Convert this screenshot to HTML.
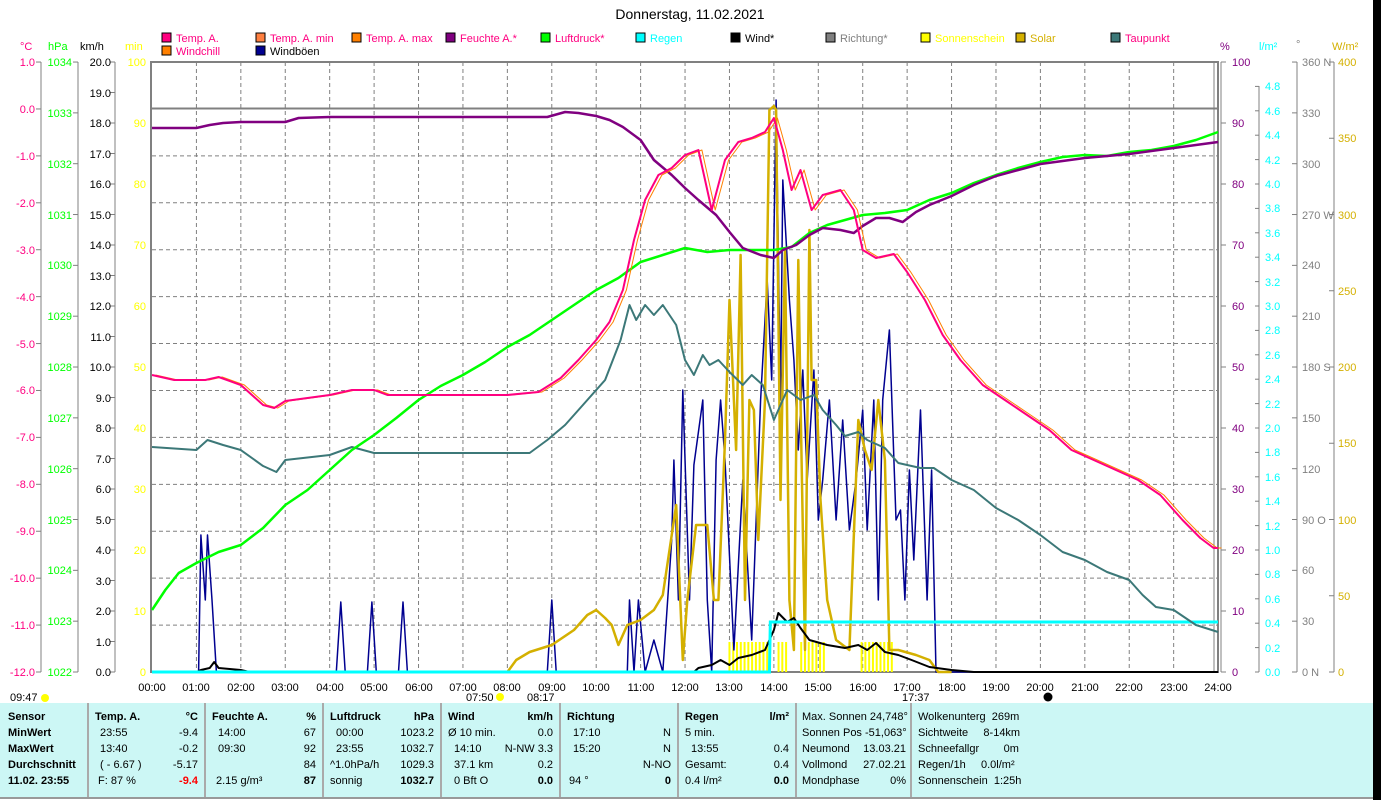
<!DOCTYPE html>
<html><head><meta charset="utf-8"><style>
body{margin:0;width:1381px;height:800px;background:#fff;overflow:hidden;font-family:"Liberation Sans",sans-serif;position:relative}
svg{position:absolute;left:0;top:0}
svg text{font-family:"Liberation Sans",sans-serif;font-size:11px}
.panel{position:absolute;left:0;top:703px;width:1373px;height:94px;background:#ccf7f5;border-bottom:2px solid #999}
.col{position:absolute;top:0;height:94px;border-right:2px solid #aaa;font-size:11px;color:#000}
.col div{position:absolute;white-space:nowrap;line-height:16px}
.b{font-weight:bold}
.blk{position:absolute;left:1373px;top:0;width:8px;height:800px;background:#000}
</style></head><body>
<svg width="1381" height="703" id="s">
<text x="690" y="19" text-anchor="middle" style="font-size:14px" fill="#000">Donnerstag, 11.02.2021</text>
<g id="grid"></g>
<g>
<rect x="162" y="33" width="9" height="9" fill="#ff0080" stroke="#000"/><text x="176" y="42" fill="#ff0080">Temp. A.</text>
<rect x="256" y="33" width="9" height="9" fill="#ff8040" stroke="#000"/><text x="270" y="42" fill="#ff0080">Temp. A. min</text>
<rect x="352" y="33" width="9" height="9" fill="#ff8000" stroke="#000"/><text x="366" y="42" fill="#ff0080">Temp. A. max</text>
<rect x="446" y="33" width="9" height="9" fill="#800080" stroke="#000"/><text x="460" y="42" fill="#ff0080">Feuchte A.*</text>
<rect x="541" y="33" width="9" height="9" fill="#00ff00" stroke="#000"/><text x="555" y="42" fill="#ff0080">Luftdruck*</text>
<rect x="636" y="33" width="9" height="9" fill="#00ffff" stroke="#000"/><text x="650" y="42" fill="#00ffff">Regen</text>
<rect x="731" y="33" width="9" height="9" fill="#000" stroke="#000"/><text x="745" y="42" fill="#000">Wind*</text>
<rect x="826" y="33" width="9" height="9" fill="#808080" stroke="#000"/><text x="840" y="42" fill="#808080">Richtung*</text>
<rect x="921" y="33" width="9" height="9" fill="#ffff00" stroke="#000"/><text x="935" y="42" fill="#ffff00">Sonnenschein</text>
<rect x="1016" y="33" width="9" height="9" fill="#d4b000" stroke="#000"/><text x="1030" y="42" fill="#d4b000">Solar</text>
<rect x="1111" y="33" width="9" height="9" fill="#3c7878" stroke="#000"/><text x="1125" y="42" fill="#ff0080">Taupunkt</text>
<rect x="162" y="46" width="9" height="9" fill="#ff8000" stroke="#000"/><text x="176" y="55" fill="#ff0080">Windchill</text>
<rect x="256" y="46" width="9" height="9" fill="#000090" stroke="#000"/><text x="270" y="55" fill="#000">Windböen</text>
</g>
<text x="20" y="50" fill="#ff0080">°C</text>
<text x="48" y="50" fill="#00ff00">hPa</text>
<text x="80" y="50" fill="#000">km/h</text>
<text x="125" y="50" fill="#ffff00">min</text>
<text x="1220" y="50" fill="#800080">%</text>
<text x="1259" y="50" fill="#00ffff">l/m²</text>
<text x="1296" y="48" fill="#808080">°</text>
<text x="1332" y="50" fill="#d4b000">W/m²</text>
<g text-anchor="end">
<text x="35" y="66" fill="#ff0080">1.0</text><text x="35" y="113" fill="#ff0080">0.0</text><text x="35" y="160" fill="#ff0080">-1.0</text><text x="35" y="207" fill="#ff0080">-2.0</text><text x="35" y="254" fill="#ff0080">-3.0</text><text x="35" y="301" fill="#ff0080">-4.0</text><text x="35" y="348" fill="#ff0080">-5.0</text><text x="35" y="394" fill="#ff0080">-6.0</text><text x="35" y="441" fill="#ff0080">-7.0</text><text x="35" y="488" fill="#ff0080">-8.0</text><text x="35" y="535" fill="#ff0080">-9.0</text><text x="35" y="582" fill="#ff0080">-10.0</text><text x="35" y="629" fill="#ff0080">-11.0</text><text x="35" y="676" fill="#ff0080">-12.0</text>
<text x="72" y="66" fill="#00ff00">1034</text><text x="72" y="117" fill="#00ff00">1033</text><text x="72" y="168" fill="#00ff00">1032</text><text x="72" y="219" fill="#00ff00">1031</text><text x="72" y="269" fill="#00ff00">1030</text><text x="72" y="320" fill="#00ff00">1029</text><text x="72" y="371" fill="#00ff00">1028</text><text x="72" y="422" fill="#00ff00">1027</text><text x="72" y="473" fill="#00ff00">1026</text><text x="72" y="524" fill="#00ff00">1025</text><text x="72" y="574" fill="#00ff00">1024</text><text x="72" y="625" fill="#00ff00">1023</text><text x="72" y="676" fill="#00ff00">1022</text>
<text x="111" y="66">20.0</text><text x="111" y="97">19.0</text><text x="111" y="127">18.0</text><text x="111" y="158">17.0</text><text x="111" y="188">16.0</text><text x="111" y="219">15.0</text><text x="111" y="249">14.0</text><text x="111" y="280">13.0</text><text x="111" y="310">12.0</text><text x="111" y="341">11.0</text><text x="111" y="371">10.0</text><text x="111" y="402">9.0</text><text x="111" y="432">8.0</text><text x="111" y="463">7.0</text><text x="111" y="493">6.0</text><text x="111" y="524">5.0</text><text x="111" y="554">4.0</text><text x="111" y="585">3.0</text><text x="111" y="615">2.0</text><text x="111" y="646">1.0</text><text x="111" y="676">0.0</text>
<g fill="#ffff00"><text x="146" y="66">100</text><text x="146" y="127">90</text><text x="146" y="188">80</text><text x="146" y="249">70</text><text x="146" y="310">60</text><text x="146" y="371">50</text><text x="146" y="432">40</text><text x="146" y="493">30</text><text x="146" y="554">20</text><text x="146" y="615">10</text><text x="146" y="676">0</text></g>
</g>
<g fill="#800080"><text x="1232" y="66">100</text><text x="1232" y="127">90</text><text x="1232" y="188">80</text><text x="1232" y="249">70</text><text x="1232" y="310">60</text><text x="1232" y="371">50</text><text x="1232" y="432">40</text><text x="1232" y="493">30</text><text x="1232" y="554">20</text><text x="1232" y="615">10</text><text x="1232" y="676">0</text></g>
<g fill="#00ffff"><text x="1265" y="90">4.8</text><text x="1265" y="115">4.6</text><text x="1265" y="139">4.4</text><text x="1265" y="164">4.2</text><text x="1265" y="188">4.0</text><text x="1265" y="212">3.8</text><text x="1265" y="237">3.6</text><text x="1265" y="261">3.4</text><text x="1265" y="286">3.2</text><text x="1265" y="310">3.0</text><text x="1265" y="334">2.8</text><text x="1265" y="359">2.6</text><text x="1265" y="383">2.4</text><text x="1265" y="408">2.2</text><text x="1265" y="432">2.0</text><text x="1265" y="456">1.8</text><text x="1265" y="481">1.6</text><text x="1265" y="505">1.4</text><text x="1265" y="530">1.2</text><text x="1265" y="554">1.0</text><text x="1265" y="578">0.8</text><text x="1265" y="603">0.6</text><text x="1265" y="627">0.4</text><text x="1265" y="652">0.2</text><text x="1265" y="676">0.0</text></g>
<g fill="#808080"><text x="1302" y="66">360 N</text><text x="1302" y="117">330</text><text x="1302" y="168">300</text><text x="1302" y="219">270 W</text><text x="1302" y="269">240</text><text x="1302" y="320">210</text><text x="1302" y="371">180 S</text><text x="1302" y="422">150</text><text x="1302" y="473">120</text><text x="1302" y="524">90 O</text><text x="1302" y="574">60</text><text x="1302" y="625">30</text><text x="1302" y="676">0 N</text></g>
<g fill="#d4b000"><text x="1338" y="66">400</text><text x="1338" y="142">350</text><text x="1338" y="219">300</text><text x="1338" y="295">250</text><text x="1338" y="371">200</text><text x="1338" y="447">150</text><text x="1338" y="524">100</text><text x="1338" y="600">50</text><text x="1338" y="676">0</text></g>
<g text-anchor="middle" fill="#000"><text x="152" y="691">00:00</text><text x="196" y="691">01:00</text><text x="241" y="691">02:00</text><text x="285" y="691">03:00</text><text x="330" y="691">04:00</text><text x="374" y="691">05:00</text><text x="419" y="691">06:00</text><text x="463" y="691">07:00</text><text x="507" y="691">08:00</text><text x="552" y="691">09:00</text><text x="596" y="691">10:00</text><text x="641" y="691">11:00</text><text x="685" y="691">12:00</text><text x="729" y="691">13:00</text><text x="774" y="691">14:00</text><text x="818" y="691">15:00</text><text x="863" y="691">16:00</text><text x="907" y="691">17:00</text><text x="952" y="691">18:00</text><text x="996" y="691">19:00</text><text x="1040" y="691">20:00</text><text x="1085" y="691">21:00</text><text x="1129" y="691">22:00</text><text x="1174" y="691">23:00</text><text x="1218" y="691">24:00</text></g>
<text x="10" y="701">09:47</text><circle cx="45" cy="698" r="4" fill="#ffff00"/>
<text x="466" y="701">07:50</text><circle cx="500" cy="697" r="4" fill="#ffff00"/>
<text x="527" y="701">08:17</text>
<text x="902" y="701">17:37</text>
<circle cx="1048" cy="697" r="4.5" fill="#000"/>
<g id="curves"></g>
</svg>
<div class="blk"></div>
<div class="panel">
 <div class="col" style="left:0;width:87px"><div class="b" style="left:8px;top:6px">Sensor</div><div class="b" style="left:8px;top:22px">MinWert</div><div class="b" style="left:8px;top:38px">MaxWert</div><div class="b" style="left:8px;top:54px">Durchschnitt</div><div class="b" style="left:8px;top:70px">11.02. 23:55</div></div>
 <div class="col" style="left:89px;width:115px"><div class="b" style="left:6px;top:6px">Temp. A.</div><div class="b" style="right:6px;top:6px">°C</div><div style="left:11px;top:22px">23:55</div><div style="right:6px;top:22px">-9.4</div><div style="left:11px;top:38px">13:40</div><div style="right:6px;top:38px">-0.2</div><div style="left:11px;top:54px">( - 6.67 )</div><div style="right:6px;top:54px">-5.17</div><div style="left:9px;top:70px">F: 87 %</div><div class="b" style="right:6px;top:70px;color:#f00">-9.4</div></div>
 <div class="col" style="left:206px;width:116px"><div class="b" style="left:6px;top:6px">Feuchte A.</div><div class="b" style="right:6px;top:6px">%</div><div style="left:12px;top:22px">14:00</div><div style="right:6px;top:22px">67</div><div style="left:12px;top:38px">09:30</div><div style="right:6px;top:38px">92</div><div style="right:6px;top:54px">84</div><div style="left:10px;top:70px">2.15 g/m³</div><div class="b" style="right:6px;top:70px">87</div></div>
 <div class="col" style="left:324px;width:116px"><div class="b" style="left:6px;top:6px">Luftdruck</div><div class="b" style="right:6px;top:6px">hPa</div><div style="left:12px;top:22px">00:00</div><div style="right:6px;top:22px">1023.2</div><div style="left:12px;top:38px">23:55</div><div style="right:6px;top:38px">1032.7</div><div style="left:6px;top:54px">^1.0hPa/h</div><div style="right:6px;top:54px">1029.3</div><div style="left:6px;top:70px">sonnig</div><div class="b" style="right:6px;top:70px">1032.7</div></div>
 <div class="col" style="left:442px;width:117px"><div class="b" style="left:6px;top:6px">Wind</div><div class="b" style="right:6px;top:6px">km/h</div><div style="left:6px;top:22px">Ø 10 min.</div><div style="right:6px;top:22px">0.0</div><div style="left:12px;top:38px">14:10</div><div style="right:6px;top:38px">N-NW 3.3</div><div style="left:12px;top:54px">37.1 km</div><div style="right:6px;top:54px">0.2</div><div style="left:12px;top:70px">0 Bft O</div><div class="b" style="right:6px;top:70px">0.0</div></div>
 <div class="col" style="left:561px;width:116px"><div class="b" style="left:6px;top:6px">Richtung</div><div style="left:12px;top:22px">17:10</div><div style="right:6px;top:22px">N</div><div style="left:12px;top:38px">15:20</div><div style="right:6px;top:38px">N</div><div style="right:6px;top:54px">N-NO</div><div style="left:8px;top:70px">94 °</div><div class="b" style="right:6px;top:70px">0</div></div>
 <div class="col" style="left:679px;width:116px"><div class="b" style="left:6px;top:6px">Regen</div><div class="b" style="right:6px;top:6px">l/m²</div><div style="left:6px;top:22px">5 min.</div><div style="left:12px;top:38px">13:55</div><div style="right:6px;top:38px">0.4</div><div style="left:6px;top:54px">Gesamt:</div><div style="right:6px;top:54px">0.4</div><div style="left:6px;top:70px">0.4 l/m²</div><div class="b" style="right:6px;top:70px">0.0</div></div>
 <div class="col" style="left:797px;width:113px"><div style="left:5px;top:6px">Max. Sonnen 24,748°</div><div style="left:5px;top:22px">Sonnen Pos -51,063°</div><div style="left:5px;top:38px">Neumond</div><div style="right:4px;top:38px">13.03.21</div><div style="left:5px;top:54px">Vollmond</div><div style="right:4px;top:54px">27.02.21</div><div style="left:5px;top:70px">Mondphase</div><div style="right:4px;top:70px">0%</div></div>
 <div class="col" style="left:912px;width:459px;border:none"><div style="left:6px;top:6px">Wolkenunterg&nbsp; 269m</div><div style="left:6px;top:22px">Sichtweite &nbsp;&nbsp;&nbsp; 8-14km</div><div style="left:6px;top:38px">Schneefallgr &nbsp;&nbsp;&nbsp;&nbsp;&nbsp;&nbsp; 0m</div><div style="left:6px;top:54px">Regen/1h &nbsp;&nbsp;&nbsp; 0.0l/m²</div><div style="left:6px;top:70px">Sonnenschein&nbsp; 1:25h</div></div>
</div>
<script>
var NS="http://www.w3.org/2000/svg";
function el(p,t,a){var e=document.createElementNS(NS,t);for(var k in a)e.setAttribute(k,a[k]);p.appendChild(e);return e;}
var g=document.getElementById('grid'),c=document.getElementById('curves');
function X(h){return 152+44.42*h;}
for(var i=1;i<24;i++)el(g,'line',{x1:X(i),y1:62,x2:X(i),y2:672,stroke:'#808080','stroke-dasharray':'4,3'});
for(var k=1;k<12;k++){var y=672-46.92*k;el(g,'line',{x1:152,y1:y,x2:1218,y2:y,stroke:'#808080','stroke-dasharray':'4,3'});}
el(g,'line',{x1:152,y1:108.5,x2:1218,y2:108.5,stroke:'#808080','stroke-width':2});
el(g,'rect',{x:151,y:62,width:1067,height:610,fill:'none',stroke:'#808080','stroke-width':2});
el(g,'line',{x1:1214,y1:62,x2:1214,y2:672,stroke:'#808080'});
[[41,62,672,46.92,-5],[78,62,672,50.83,-5],[115,62,672,30.5,-5],[1221,62,672,61,5],[1259,86,672,24.4,-4],[1297,62,672,50.83,-5],[1334,62,672,76.25,-5]].forEach(function(a){
 el(g,'line',{x1:a[0],y1:a[1],x2:a[0],y2:a[2],stroke:'#808080'});
 for(var y=a[2];y>=a[1]-1;y-=a[3])el(g,'line',{x1:a[0],y1:y,x2:a[0]+a[4],y2:y,stroke:'#808080'});
});
function poly(pts,col,w){var s=pts.map(function(p){return X(p[0]).toFixed(1)+','+p[1];}).join(' ');el(c,'polyline',{points:s,fill:'none',stroke:col,'stroke-width':w||2,'stroke-linejoin':'round'});}
for(var h=13.0;h<16.7;h+=0.085){if((h>13.9&&h<14.05)||(h>14.3&&h<14.55)||(h>15.2&&h<15.9))continue;el(c,'line',{x1:X(h),y1:642,x2:X(h),y2:672,stroke:'#ffff00','stroke-width':2});}
var gust=[[0,672],[1.05,672],[1.1,535],[1.2,600],[1.25,535],[1.35,600],[1.45,672],[4.15,672],[4.25,602],[4.35,672],[4.85,672],[4.95,602],[5.05,672],[5.55,672],[5.65,602],[5.75,672],[8.9,672],[9.0,600],[9.1,672],[10.7,672],[10.75,600],[10.85,672],[10.95,600],[11.1,672],[11.3,640],[11.5,672],[11.7,540],[11.75,460],[11.85,600],[11.95,390],[12.1,600],[12.2,465],[12.4,400],[12.5,600],[12.6,672],[12.7,460],[12.8,400],[12.9,460],[13.1,650],[13.3,480],[13.5,640],[13.7,400],[13.85,280],[13.95,380],[14.05,100],[14.15,400],[14.2,180],[14.35,300],[14.45,360],[14.55,450],[14.65,370],[14.75,480],[14.9,370],[15.0,520],[15.1,480],[15.25,400],[15.4,520],[15.55,420],[15.7,530],[15.85,480],[16.0,410],[16.1,530],[16.25,400],[16.35,600],[16.45,400],[16.6,330],[16.75,520],[16.85,510],[16.95,600],[17.05,470],[17.15,560],[17.3,410],[17.45,600],[17.55,470],[17.65,672],[24,672]];
poly(gust,'#000090',1.5);
poly([[8,672],[8.2,660],[8.5,652],[9,645],[9.5,630],[9.8,615],[10,610],[10.2,618],[10.35,625],[10.5,645],[10.7,625],[11,620],[11.3,610],[11.5,595],[11.8,505],[11.95,660],[12.05,600],[12.25,525],[12.5,525],[12.65,600],[12.75,600],[12.9,440],[13.0,300],[13.15,450],[13.25,255],[13.35,600],[13.45,400],[13.55,410],[13.65,540],[13.8,400],[13.9,110],[14.0,106],[14.05,110],[14.15,500],[14.25,250],[14.35,600],[14.45,650],[14.55,260],[14.6,400],[14.7,650],[14.8,230],[14.85,380],[14.95,380],[15.05,500],[15.2,600],[15.4,640],[15.7,650],[15.9,420],[16.05,450],[16.2,470],[16.35,400],[16.5,460],[16.6,650],[16.8,650],[17.2,655],[17.5,660],[17.7,672],[18,672]],'#d4b000',2.5);
poly([[1,672],[1.1,670],[1.3,668],[1.4,662],[1.5,668],[2.0,670],[2.2,672],[12.2,672],[12.3,668],[12.6,665],[12.8,660],[13.0,665],[13.2,658],[13.5,655],[13.8,650],[14.0,630],[14.1,613],[14.3,622],[14.45,618],[14.6,628],[14.8,640],[15.2,645],[15.6,648],[15.9,645],[16.1,650],[16.3,643],[16.5,652],[16.8,655],[17.1,660],[17.5,667],[18,670],[18.5,672],[24,672]],'#000',2);
el(c,'polyline',{points:'152,672 '+X(13.9)+',672 '+X(13.92)+',622 1218,622',fill:'none',stroke:'#00ffff','stroke-width':3});
poly([[0,447],[1,450],[1.25,440],[1.6,445],[2,450],[2.5,466],[2.8,472],[3,460],[4,455],[4.5,447],[5,453],[8.5,453],[8.9,440],[9.3,425],[9.7,405],[10.2,380],[10.55,340],[10.75,305],[10.9,320],[11.1,305],[11.3,315],[11.5,305],[11.8,325],[12.0,360],[12.2,375],[12.4,355],[12.55,365],[12.75,360],[13.0,372],[13.3,385],[13.5,375],[13.75,385],[14.0,420],[14.3,390],[14.6,400],[14.9,395],[15.1,410],[15.4,425],[15.6,436],[15.9,432],[16.1,440],[16.5,448],[16.8,463],[17.3,468],[17.6,468],[18,480],[18.5,490],[19,508],[19.5,520],[20,535],[20.5,552],[21,560],[21.5,572],[22,580],[22.3,595],[22.6,607],[23,610],[23.5,625],[24,632]],'#3c7878',2);
poly([[0,610],[0.3,590],[0.6,573],[1,563],[1.5,552],[2,545],[2.5,528],[3,505],[3.5,490],[4,470],[4.5,450],[5,435],[5.5,418],[6,400],[6.5,386],[7,375],[7.5,362],[8,347],[8.5,335],[9,320],[9.5,305],[10,290],[10.5,278],[11,262],[11.5,255],[12,248],[12.5,252],[13,250],[13.5,250],[14,250],[14.4,247],[14.8,233],[15.2,225],[15.6,220],[16,215],[16.5,213],[17,210],[17.5,200],[18,193],[18.5,183],[19,175],[19.5,168],[20,162],[20.5,157],[21,155],[21.5,156],[22,152],[22.5,150],[23,146],[23.5,140],[24,132]],'#00ff00',2.5);
poly([[0,128],[1,128],[1.3,125],[1.6,123],[2,122],[3,122],[3.3,118],[4,117],[8.9,117],[9.3,112],[9.6,113],[10,116],[10.3,120],[10.6,127],[11,140],[11.3,160],[11.7,175],[12,188],[12.3,200],[12.7,215],[13,232],[13.3,248],[13.7,255],[14,258],[14.2,250],[14.5,245],[14.8,235],[15.1,228],[15.5,230],[15.8,233],[16,226],[16.3,218],[16.6,218],[16.9,222],[17.2,212],[17.5,205],[18,196],[18.5,185],[19,176],[19.5,170],[20,164],[21,158],[22,154],[23,148],[24,142]],'#800080',2.5);
var T=[[0,375],[0.5,380],[1.2,380],[1.5,377],[2,385],[2.5,405],[2.75,408],[3,401],[3.5,398],[4,395],[4.5,390],[5,390],[5.3,395],[8,395],[8.7,392],[9.2,378],[9.6,360],[10,340],[10.3,322],[10.6,290],[10.85,240],[11.1,200],[11.4,175],[11.7,168],[12,155],[12.3,150],[12.6,210],[12.9,160],[13.2,142],[13.5,138],[13.8,132],[14.0,118],[14.2,150],[14.4,190],[14.6,170],[14.85,210],[15.1,195],[15.5,190],[15.8,210],[16,250],[16.3,258],[16.7,254],[17,272],[17.4,300],[17.8,335],[18.2,360],[18.7,385],[19.2,400],[19.7,415],[20.2,430],[20.7,450],[21.2,460],[21.7,470],[22.2,480],[22.7,495],[23.2,520],[23.6,538],[23.9,548],[24,548]];
poly(T.map(function(p){return [p[0]+0.08,p[1]];}),'#ff8000',1);
poly(T,'#ff0080',2);
</script>
</body></html>
